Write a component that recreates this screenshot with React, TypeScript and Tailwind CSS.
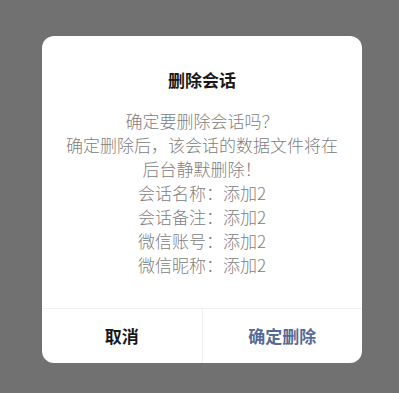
export default function App() {
  const lines = [
    "确定要删除会话吗？",
    "确定删除后，该会话的数据文件将在后台静默删除！",
  ];
  const info = [
    ["会话名称", "添加2"],
    ["会话备注", "添加2"],
    ["微信账号", "添加2"],
    ["微信昵称", "添加2"],
  ];
  return (
    <div
      className="w-[399px] h-[393px] bg-[#717171] flex pl-[42px] pt-[36px]"
      style={{ fontFamily: '"Noto Sans CJK SC", "Noto Sans", sans-serif' }}
    >
      <div className="w-[320px] h-[327px] bg-white rounded-[12px] flex flex-col overflow-hidden">
        <div className="flex-1 flex flex-col items-center px-6 pt-[32px]">
          <h2 className="text-[17px] leading-[24px] font-bold text-[#191919]">删除会话</h2>
          <div className="mt-[17px] text-[17px] leading-[24px] font-light text-[#808080] text-center">
            {lines.map((l) => (
              <p key={l}>{l}</p>
            ))}
            {info.map(([k, v]) => (
              <p key={k}>
                {k}：{v}
              </p>
            ))}
          </div>
        </div>
        <div className="h-[55px] border-t border-[#f0f0f0] flex">
          <button className="flex-1 text-[17px] font-bold text-[#191919] border-r border-[#f0f0f0]">
            取消
          </button>
          <button className="flex-1 text-[17px] font-bold text-[#576b95]">确定删除</button>
        </div>
      </div>
    </div>
  );
}
